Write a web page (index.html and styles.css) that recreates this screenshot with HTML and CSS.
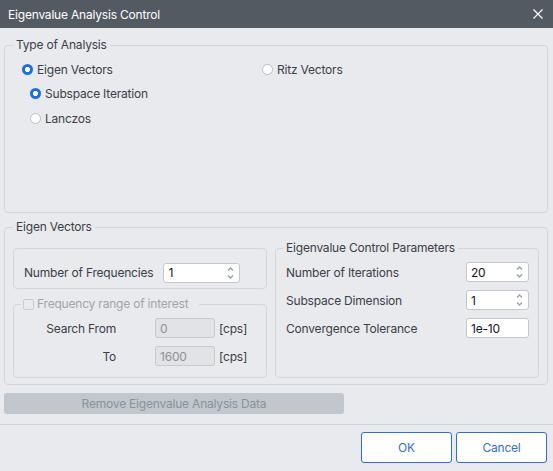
FILE: index.html
```html
<!DOCTYPE html>
<html>
<head>
<meta charset="utf-8">
<title>Eigenvalue Analysis Control</title>
<link rel="stylesheet" href="styles.css">
</head>
<body>
<div class="titlebar">
  <span class="title">Eigenvalue Analysis Control</span>
  <svg class="close" width="10" height="10" viewBox="0 0 10 10"><path d="M0.5 0.5L9.5 9.5M9.5 0.5L0.5 9.5" stroke="#ffffff" stroke-width="1.2" fill="none"/></svg>
</div>
<div class="content">
  <fieldset class="group type">
    <legend>Type of Analysis</legend>
    <div class="type-body">
      <div class="col">
        <div class="radio"><span class="dot on"></span>Eigen Vectors</div>
        <div class="radio sub"><span class="dot on"></span>Subspace Iteration</div>
        <div class="radio sub"><span class="dot"></span>Lanczos</div>
      </div>
      <div class="col">
        <div class="radio"><span class="dot"></span>Ritz Vectors</div>
      </div>
    </div>
  </fieldset>

  <fieldset class="group ev">
    <legend>Eigen Vectors</legend>
    <div class="ev-body">
      <div class="left">
        <div class="box1">
          <span class="lbl">Number of Frequencies</span>
          <div class="field nf"><span>1</span>
            <svg class="spin" width="7" height="14" viewBox="0 0 7 14"><path d="M1 4.5L3.5 2L6 4.5M1 9.5L3.5 12L6 9.5" stroke="#9ba1a8" stroke-width="1.4" fill="none"/></svg>
          </div>
        </div>
        <fieldset class="freq">
          <legend><span class="check"></span>Frequency range of interest</legend>
          <div class="freq-grid">
            <span class="flbl">Search From</span>
            <div class="field dis">0</div>
            <span class="unit">[cps]</span>
            <span class="flbl">To</span>
            <div class="field dis">1600</div>
            <span class="unit">[cps]</span>
          </div>
        </fieldset>
      </div>
      <fieldset class="params">
        <legend>Eigenvalue Control Parameters</legend>
        <div class="params-grid">
          <span>Number of Iterations</span>
          <div class="field"><span>20</span>
            <svg class="spin" width="7" height="14" viewBox="0 0 7 14"><path d="M1 4.5L3.5 2L6 4.5M1 9.5L3.5 12L6 9.5" stroke="#9ba1a8" stroke-width="1.4" fill="none"/></svg>
          </div>
          <span>Subspace Dimension</span>
          <div class="field"><span>1</span>
            <svg class="spin" width="7" height="14" viewBox="0 0 7 14"><path d="M1 4.5L3.5 2L6 4.5M1 9.5L3.5 12L6 9.5" stroke="#9ba1a8" stroke-width="1.4" fill="none"/></svg>
          </div>
          <span>Convergence Tolerance</span>
          <div class="field"><span>1e-10</span></div>
        </div>
      </fieldset>
    </div>
  </fieldset>

  <div class="remove">Remove Eigenvalue Analysis Data</div>
</div>
<div class="footer">
  <button class="btn">OK</button>
  <button class="btn">Cancel</button>
</div>
</body>
</html>
```

FILE: styles.css
```css
* { box-sizing: border-box; margin: 0; padding: 0; }
html, body { width: 553px; height: 471px; overflow: hidden; }
body {
  background: #e9eaee;
  font-family: Inter, "Noto Sans", sans-serif;
  font-size: 12px;
  letter-spacing: -0.2px;
  color: #3b4047;
}
.titlebar {
  height: 28px;
  background: #545a62;
  color: #ffffff;
  display: flex;
  align-items: center;
  justify-content: space-between;
  padding: 0 10px 0 8px;
}
.title { font-size: 12px; }

.content { padding: 9px 5px 0 4px; }

fieldset {
  border: 1px solid #d3d5d9;
  border-radius: 4px;
  padding: 0;
  min-width: 0;
}
legend {
  margin-left: 8px;
  padding: 0 3px;
  line-height: 16px;
  color: #3b4047;
}

.type { height: 176px; }
.type-body {
  display: grid;
  grid-template-columns: 240px 1fr;
  padding: 4px 0 0 17px;
}
.radio {
  display: flex;
  align-items: center;
  gap: 4px;
  height: 24.5px;
}
.radio.sub { padding-left: 8px; }
.dot {
  width: 11px;
  height: 11px;
  border-radius: 50%;
  background: #ffffff;
  border: 1px solid #b9bdc3;
  flex: none;
}
.dot.on {
  border: none;
  background: radial-gradient(circle, #ffffff 0 2.3px, #1a6ee6 2.9px);
}

.ev { margin-top: 6px; }
.ev-body {
  display: grid;
  grid-template-columns: 254px 264px;
  column-gap: 8px;
  padding: 5px 9px 6px 8px;
  align-items: start;
}
.left { display: flex; flex-direction: column; }
.box1 {
  margin-top: 8px;
  height: 41px;
  border: 1px solid #d3d5d9;
  border-radius: 4px;
  display: flex;
  align-items: center;
  padding: 13px 0 5px 10px;
}
.field {
  height: 20px;
  background: #ffffff;
  border: 1px solid #c3c7cc;
  border-radius: 3px;
  display: flex;
  align-items: center;
  justify-content: space-between;
  padding: 0 5px 0 4px;
  color: #15181c;
}
.nf { width: 77px; margin-left: 10px; }
.spin { flex: none; }

.freq { margin-top: 7px; height: 82px; }
.freq legend {
  margin-left: 7px;
  padding: 0 11px 0 2px;
  color: #a0a5ab;
  display: flex;
  align-items: center;
  gap: 3px;
}
.check {
  width: 11px;
  height: 11px;
  border: 1px solid #c8ccd1;
  border-radius: 2px;
  background: #e9eaee;
}
.freq-grid {
  display: grid;
  grid-template-columns: 141px 60px auto;
  row-gap: 8px;
  padding: 6px 0 0 0;
  align-items: center;
}
.flbl { text-align: right; padding-right: 39px; }
.field.dis {
  background: #e1e3e6;
  border-color: #c6cace;
  color: #8c9197;
}
.unit { padding-left: 4px; }

.params { height: 138px; }
.params legend { margin-left: 7px; }
.params-grid {
  display: grid;
  grid-template-columns: 1fr 63px;
  row-gap: 8px;
  padding: 6px 9px 0 10px;
  align-items: center;
}

.remove {
  margin-top: 8px;
  width: 340px;
  height: 21px;
  background: #c1c7cc;
  border-radius: 3px;
  color: #8a939b;
  display: flex;
  align-items: center;
  justify-content: center;
}

.footer {
  margin-top: 10px;
  border-top: 1px solid #cfd2d6;
  display: flex;
  justify-content: flex-end;
  gap: 4px;
  padding: 7px 6px 0 0;
}
.btn {
  width: 91px;
  height: 31px;
  background: #ffffff;
  border: 1px solid #2a6fe3;
  border-radius: 3px;
  color: #2f6fdc;
  font-family: Inter, "Noto Sans", sans-serif;
  font-size: 12px;
  letter-spacing: -0.2px;
}
```
